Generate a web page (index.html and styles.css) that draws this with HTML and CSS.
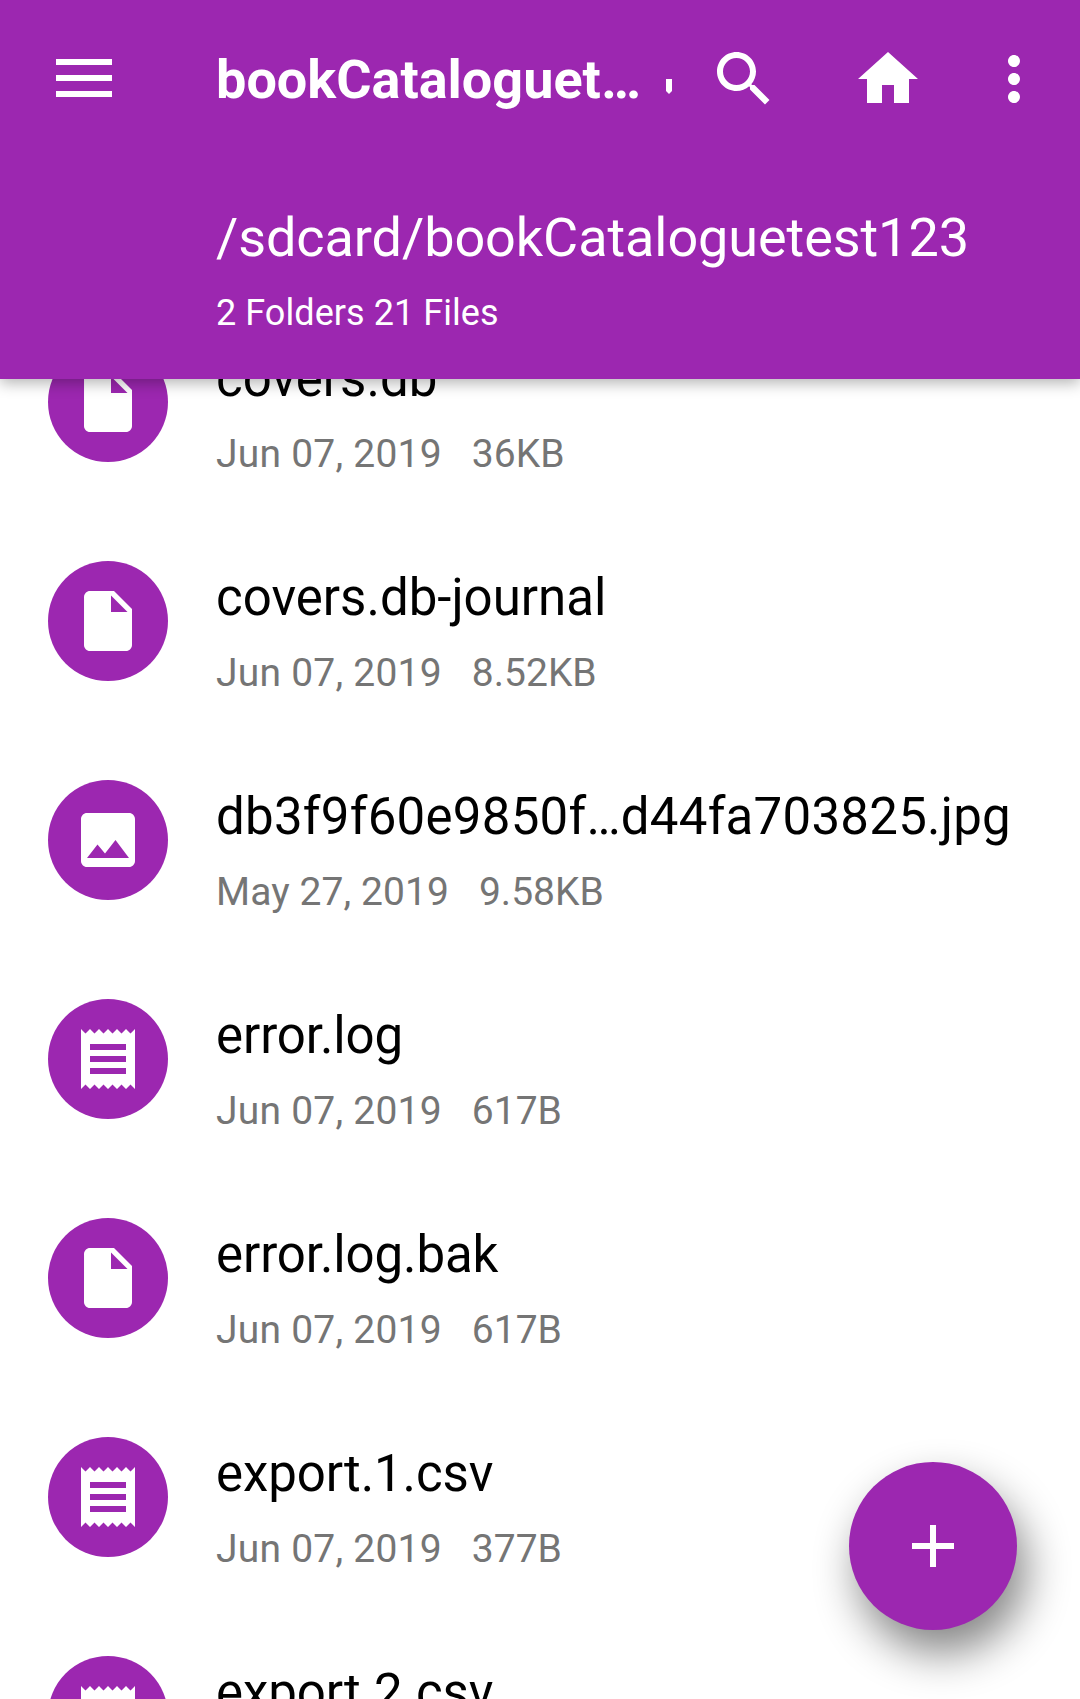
FILE: index.html
```html
<!DOCTYPE html>
<html lang="en">
<head>
<meta charset="utf-8">
<title>bookCataloguetest123</title>
<link rel="stylesheet" href="styles.css">
</head>
<body>
<svg class="sprite" aria-hidden="true">
  <symbol id="file" viewBox="0 0 24 24"><path d="M6 2c-1.1 0-1.99.9-1.99 2L4 20c0 1.1.89 2 1.99 2H18c1.1 0 2-.9 2-2V8l-6-6H6zm7 7V3.5L18.5 9H13z"/></symbol>
  <symbol id="image" viewBox="0 0 24 24"><path d="M21 19V5c0-1.1-.9-2-2-2H5c-1.1 0-2 .9-2 2v14c0 1.1.9 2 2 2h14c1.1 0 2-.9 2-2zM8.5 13.5l2.5 3.01L14.5 12l4.5 6H5l3.5-4.5z"/></symbol>
  <symbol id="receipt" viewBox="0 0 24 24"><path d="M18 17H6v-2h12v2zm0-4H6v-2h12v2zm0-4H6V7h12v2zM3 22l1.5-1.5L6 22l1.5-1.5L9 22l1.5-1.5L12 22l1.5-1.5L15 22l1.5-1.5L18 22l1.5-1.5L21 22V2l-1.5 1.5L18 2l-1.5 1.5L15 2l-1.5 1.5L12 2l-1.5 1.5L9 2 7.5 3.5 6 2 4.5 3.5 3 2v20z"/></symbol>
</svg>
<div class="app">
  <header class="header">
    <div class="toolbar">
      <svg class="menu" viewBox="0 0 56 38"><path d="M0 0h56v6H0zM0 16h56v6H0zM0 32h56v6H0z"/></svg>
      <h1 class="title">bookCataloguet…</h1>
      <svg class="marker" viewBox="0 0 6 15"><path d="M0 0h6v12L3 15 0 12z"/></svg>
      <svg class="icon search" viewBox="0 0 24 24"><path d="M15.5 14h-.79l-.28-.27C15.41 12.59 16 11.11 16 9.5 16 5.91 13.09 3 9.5 3S3 5.91 3 9.5 5.91 16 9.5 16c1.61 0 3.09-.59 4.23-1.57l.27.28v.79l5 4.99L20.49 19l-4.99-5zm-6 0C7.01 14 5 11.99 5 9.5S7.01 5 9.5 5 14 7.01 14 9.5 11.99 14 9.5 14z"/></svg>
      <svg class="icon home" viewBox="0 0 24 24"><path d="M10 20v-6h4v6h5v-8h3L12 3 2 12h3v8z"/></svg>
      <svg class="icon more" viewBox="0 0 24 24"><path d="M12 8c1.1 0 2-.9 2-2s-.9-2-2-2-2 .9-2 2 .9 2 2 2zm0 2c-1.1 0-2 .9-2 2s.9 2 2 2 2-.9 2-2-.9-2-2-2zm0 6c-1.1 0-2 .9-2 2s.9 2 2 2 2-.9 2-2-.9-2-2-2z"/></svg>
    </div>
    <div class="path">/sdcard/bookCataloguetest123</div>
    <div class="summary">2 Folders 21 Files</div>
  </header>
  <main class="list">
    <div class="row"><div class="badge"><svg class="icon"><use href="#file"/></svg></div><div class="text"><div class="name">covers.db</div><div class="meta"><span class="date">Jun 07, 2019</span><span>36KB</span></div></div></div>
    <div class="row"><div class="badge"><svg class="icon"><use href="#file"/></svg></div><div class="text"><div class="name">covers.db-journal</div><div class="meta"><span class="date">Jun 07, 2019</span><span>8.52KB</span></div></div></div>
    <div class="row"><div class="badge"><svg class="icon"><use href="#image"/></svg></div><div class="text"><div class="name name-long">db3f9f60e9850f…d44fa703825.jpg</div><div class="meta"><span class="date date-wide">May 27, 2019</span><span>9.58KB</span></div></div></div>
    <div class="row"><div class="badge"><svg class="icon"><use href="#receipt"/></svg></div><div class="text"><div class="name name-tight">error.log</div><div class="meta"><span class="date">Jun 07, 2019</span><span>617B</span></div></div></div>
    <div class="row"><div class="badge"><svg class="icon"><use href="#file"/></svg></div><div class="text"><div class="name name-tight">error.log.bak</div><div class="meta"><span class="date">Jun 07, 2019</span><span>617B</span></div></div></div>
    <div class="row"><div class="badge"><svg class="icon"><use href="#receipt"/></svg></div><div class="text"><div class="name name-tight">export.1.csv</div><div class="meta"><span class="date">Jun 07, 2019</span><span>377B</span></div></div></div>
    <div class="row"><div class="badge"><svg class="icon"><use href="#receipt"/></svg></div><div class="text"><div class="name name-tight">export.2.csv</div></div></div>
  </main>
  <button class="fab" aria-label="Add"><svg class="icon" viewBox="0 0 24 24"><path d="M19 13h-6v6h-2v-6H5v-2h6V5h2v6h6z"/></svg></button>
</div>
</body>
</html>
```
FILE: styles.css
```css
* { box-sizing: border-box; }

body {
  margin: 0;
  background: #fff;
  font-family: Roboto, sans-serif;
}

svg { display: block; fill: #fff; flex: none; }
.sprite { display: none; }
.icon { width: 72px; height: 72px; }

.app {
  position: relative;
  width: 1080px;
  height: 1699px;
  overflow: hidden;
}

/* Header */
.header {
  position: relative;
  z-index: 1;
  height: 379px;
  background: #9c27b0;
  color: #fff;
  box-shadow: 0 4px 14px rgba(0, 0, 0, .3);
}

.toolbar {
  display: flex;
  align-items: center;
  height: 158px;
  padding-left: 56px;
}

.menu { width: 56px; height: 38px; margin-right: 104px; margin-bottom: 2px; }

.title {
  width: 450px;
  margin: 2px 0 0;
  font-size: 54px;
  line-height: 72px;
  font-weight: 700;
  white-space: nowrap;
}

.marker { width: 6px; height: 15px; margin-top: 15px; }
.search { margin-left: 36px; }
.home { margin-left: 72px; }
.more { margin-left: 54px; }

.path {
  margin: 48px 0 0 216px;
  font-size: 54px;
  line-height: 64px;
  letter-spacing: -.08px;
  white-space: nowrap;
}

.summary {
  margin: 21px 0 0 216px;
  font-size: 36px;
  line-height: 44px;
  letter-spacing: .06px;
}

/* File list, scrolled partly under the header */
.list { margin-top: -86px; }

.row {
  display: flex;
  gap: 48px;
  height: 219px;
  padding-left: 48px;
}

.badge {
  display: flex;
  flex: none;
  align-items: center;
  justify-content: center;
  width: 120px;
  height: 120px;
  margin-top: 49px;
  border-radius: 50%;
  background: #9c27b0;
}

.text { padding-top: 56px; white-space: nowrap; }

.name {
  font-size: 51px;
  line-height: 60px;
  color: #000;
}
.name-long { letter-spacing: .25px; }
.name-tight { letter-spacing: -.1px; }

.meta {
  display: flex;
  gap: 30px;
  margin-top: 21px;
  font-size: 39px;
  line-height: 48px;
  color: #757575;
}
.date { letter-spacing: .23px; }
.date-wide { letter-spacing: .08px; }

/* Floating add button */
.fab {
  position: absolute;
  right: 63px;
  bottom: 69px;
  z-index: 2;
  display: flex;
  align-items: center;
  justify-content: center;
  width: 168px;
  height: 168px;
  padding: 0;
  border: 0;
  border-radius: 50%;
  background: #9c27b0;
  box-shadow: 9px 23px 44px rgba(0, 0, 0, .48);
}
```
